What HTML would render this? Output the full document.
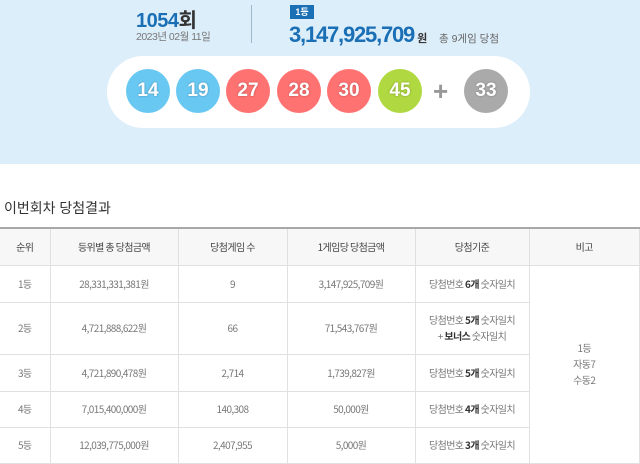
<!DOCTYPE html>
<html><head><meta charset="utf-8"><style>
*{margin:0;padding:0;box-sizing:border-box}
body{width:640px;height:463px;overflow:hidden;background:#fff;font-family:"Liberation Sans","Noto Sans CJK KR",sans-serif;position:relative}
.top{position:absolute;left:0;top:0;width:640px;height:164px;background:#ddeefb}
.a{position:absolute;white-space:nowrap}
.pill{position:absolute;left:107px;top:56px;width:423px;height:72px;border-radius:36px;background:#fff}
.ball{position:absolute;top:69px;width:44px;height:44px;border-radius:50%;color:#fff;font-weight:bold;font-size:19px;line-height:44px;text-align:center;text-shadow:0 0 2px rgba(0,0,0,.3)}
table{position:absolute;left:0;top:227px;width:640px;border-collapse:collapse;border-top:2px solid #a8a8a8;font-family:"Noto Sans CJK KR",sans-serif;font-size:10px;line-height:16px;color:#777;letter-spacing:-0.6px}
td,th{border:1px solid #e0e0e0;text-align:center;font-weight:normal;vertical-align:middle;padding:0}
th{background:#f7f7f7;height:37px;color:#444}
td b{color:#333}
tr td:first-child,tr th:first-child{border-left:none}
</style></head><body>
<div class="top"></div>
<div class="a" style="left:136px;top:4px;font-size:20px;font-weight:bold;color:#1a6fb5;letter-spacing:-0.5px">1054<span style="color:#333">회</span></div>
<div class="a" style="left:136px;top:29px;font-size:10.5px;color:#777;letter-spacing:-0.5px">2023년 02월 11일</div>
<div class="a" style="left:251px;top:5px;width:1px;height:38px;background:#9bb8d0"></div>
<div class="a" style="left:290px;top:5px;width:24px;height:14px;background:#1a6fb5;color:#fff;font-size:9px;font-weight:bold;text-align:center;line-height:14px">1등</div>
<div class="a" style="left:289px;top:22px;font-size:22px;font-weight:bold;color:#1a6fb5;letter-spacing:-1.2px">3,147,925,709<span style="font-size:11px;color:#333;letter-spacing:0"> 원</span></div>
<div class="a" style="left:439px;top:31px;font-size:10.5px;color:#666">총 9게임 당첨</div>
<div class="pill"></div>
<div class="ball" style="left:126px;background:#69c8f2">14</div>
<div class="ball" style="left:176px;background:#69c8f2">19</div>
<div class="ball" style="left:226px;background:#ff7272">27</div>
<div class="ball" style="left:277px;background:#ff7272">28</div>
<div class="ball" style="left:327px;background:#ff7272">30</div>
<div class="ball" style="left:378px;background:#b0d840">45</div>
<div class="a" style="left:433px;top:76px;font-size:26px;font-weight:bold;color:#999">+</div>
<div class="ball" style="left:464px;background:#aaa">33</div>
<div class="a" style="left:4px;top:198px;font-size:14px;color:#333">이번회차 당첨결과</div>
<table>
<tr><th style="width:50px">순위</th><th style="width:128px">등위별 총 당첨금액</th><th style="width:109px">당첨게임 수</th><th style="width:128px">1게임당 당첨금액</th><th style="width:114px">당첨기준</th><th>비고</th></tr>
<tr style="height:37px"><td>1등</td><td>28,331,331,381원</td><td>9</td><td>3,147,925,709원</td><td>당첨번호 <b>6개</b> 숫자일치</td><td rowspan="5">1등<br>자동7<br>수동2</td></tr>
<tr style="height:52px"><td>2등</td><td>4,721,888,622원</td><td>66</td><td>71,543,767원</td><td>당첨번호 <b>5개</b> 숫자일치<br>+ <b>보너스</b> 숫자일치</td></tr>
<tr style="height:37px"><td>3등</td><td>4,721,890,478원</td><td>2,714</td><td>1,739,827원</td><td>당첨번호 <b>5개</b> 숫자일치</td></tr>
<tr style="height:36px"><td>4등</td><td>7,015,400,000원</td><td>140,308</td><td>50,000원</td><td>당첨번호 <b>4개</b> 숫자일치</td></tr>
<tr style="height:36px"><td>5등</td><td>12,039,775,000원</td><td>2,407,955</td><td>5,000원</td><td>당첨번호 <b>3개</b> 숫자일치</td></tr>
</table>
</body></html>
